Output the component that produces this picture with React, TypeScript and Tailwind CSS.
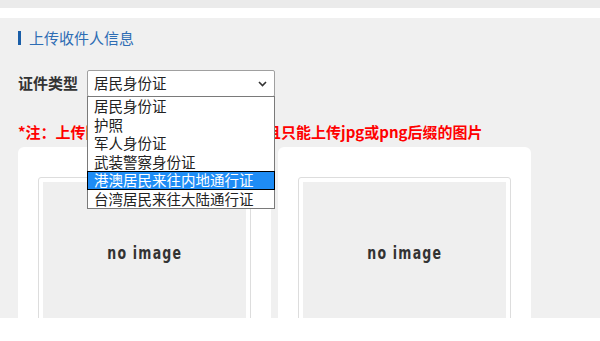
import React from "react";

const cjk = { fontFamily: "'Noto Sans CJK SC', 'Noto Sans', sans-serif" };

const options = [
  "居民身份证",
  "护照",
  "军人身份证",
  "武装警察身份证",
  "港澳居民来往内地通行证",
  "台湾居民来往大陆通行证",
];

function ImageCard() {
  return (
    <div className="w-[253px] h-[200px] shrink-0 bg-white rounded-[6px] pt-[30px] px-[20px]">
      <div className="border border-[#dddddd] rounded-[3px] p-[4px] bg-white">
        <div className="h-[150px] bg-[#efefef] flex items-center justify-center pb-[6px]">
          <span
            className="text-[#333333] text-[17px] font-bold tracking-[1.5px]"
            style={{ fontFamily: "'DejaVu Sans Condensed', 'Roboto', 'DejaVu Sans', sans-serif", transform: "scaleX(0.82)" }}
          >
            no image
          </span>
        </div>
      </div>
    </div>
  );
}

export default function App() {
  return (
    <div className="w-[600px] h-[341px] bg-white overflow-hidden" style={cjk}>
      <div className="h-[8px] bg-[#ebebeb]" />
      <div className="h-[10px] bg-white" />
      <div className="h-[300px] bg-[#f0f0f0] overflow-hidden pl-[18px]">
        <div className="mt-[13px] h-[14px] flex items-center">
          <div className="w-[3px] h-[14px] bg-[#1a5ea8]" />
          <span className="ml-[8px] text-[15px] leading-[14px] text-[#2e6db4]">上传收件人信息</span>
        </div>

        <div className="mt-[25px] h-[27px] flex items-center">
          <span className="text-[15px] font-bold text-[#333333] w-[69px]">证件类型</span>
          <div className="relative w-[188px] h-[27px]">
            <div className="w-full h-full bg-white border border-[#a0a0a0] rounded-[2px] flex items-center pl-[6px] pr-[8px]">
              <span className="flex-1 text-[14.5px] text-[#222222] leading-none">居民身份证</span>
              <svg width="9" height="6" viewBox="0 0 9 6" className="mr-[-1px]">
                <polyline points="1,1 4.5,4.5 8,1" fill="none" stroke="#333333" strokeWidth="1.6" />
              </svg>
            </div>
            <div className="absolute left-0 top-[26px] w-[188px] bg-white border border-[#7a7a7a] z-10">
              {options.map((o, i) => (
                <div
                  key={o}
                  className={
                    i === 4
                      ? "h-[18.5px] flex items-center pl-[6px] -mx-px bg-[#1e8cf5] border border-black text-white text-[14.5px] leading-none"
                      : "h-[18.5px] flex items-center pl-[6px] text-[#222222] text-[14.5px] leading-none"
                  }
                >
                  {o}
                </div>
              ))}
            </div>
          </div>
        </div>

        <div className="mt-[25px] h-[20px] flex items-center text-[15px] font-bold text-[#ff0000] whitespace-nowrap">
          *注：上传图片大小不能超过10M，并且只能上传jpg或png后缀的图片
        </div>

        <div className="mt-[5px] flex gap-[7px]">
          <ImageCard />
          <ImageCard />
        </div>
      </div>
    </div>
  );
}
